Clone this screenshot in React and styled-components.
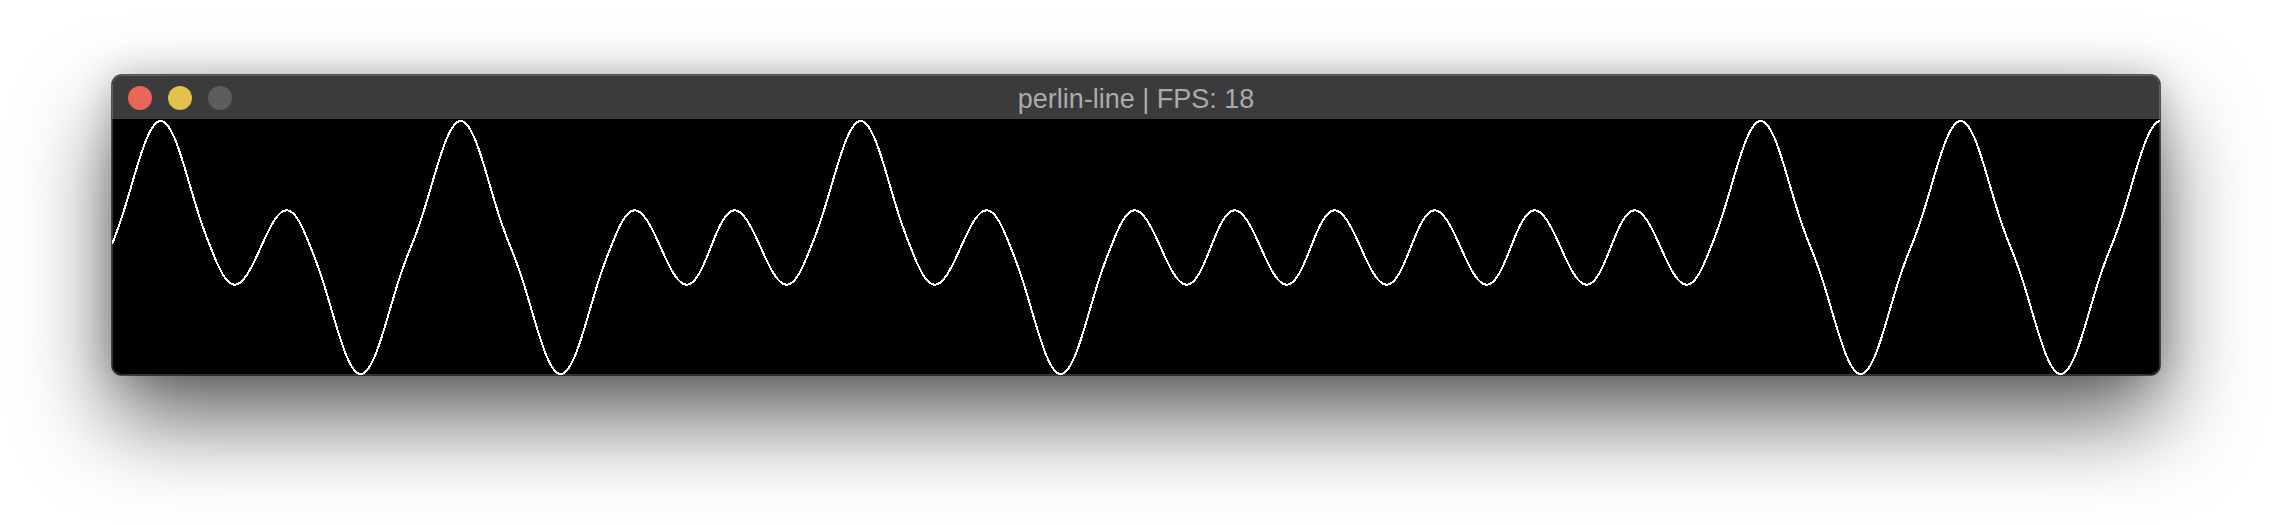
import React from "react";
import styled, { createGlobalStyle } from "styled-components";

const Global = createGlobalStyle`
  html, body { margin: 0; padding: 0; background: #ffffff; }
  body { width: 2272px; height: 524px; overflow: hidden; font-family: "Liberation Sans", Arial, sans-serif; }
`;

const Stage = styled.div`
  width: 2272px;
  height: 524px;
  box-sizing: border-box;
  padding: 75px 112px 0 112px;
  background: #ffffff;
`;

const Window = styled.div`
  position: relative;
  width: 2048px;
  border-radius: 10px;
  overflow: hidden;
  background: #000;
  box-shadow: 0 0 0 1px rgba(0, 0, 0, 0.6), 0 44px 90px rgba(0, 0, 0, 0.62),
    0 0 36px rgba(0, 0, 0, 0.2);
  &::after {
    content: "";
    position: absolute;
    inset: 0;
    border-radius: 10px;
    box-shadow: inset 0 0 0 1px rgba(255, 255, 255, 0.2);
    pointer-events: none;
  }
`;

const TitleBar = styled.div`
  height: 44px;
  display: grid;
  grid-template-columns: 1fr auto 1fr;
  align-items: center;
  background: #3b3b3d;
`;

const Lights = styled.div`
  display: flex;
  gap: 16px;
  padding-left: 16px;
  align-items: center;
`;

const Light = styled.span`
  width: 24px;
  height: 24px;
  border-radius: 50%;
  background: ${(p) => p.$color};
  display: block;
`;

const Title = styled.div`
  font-family: "Liberation Sans", Arial, sans-serif;
  font-size: 27px;
  color: #ababac;
  line-height: 44px;
  padding-top: 2px;
  white-space: nowrap;
`;

const Canvas = styled.svg`
  display: block;
  width: 2048px;
  height: 256px;
  background: #000;
`;

const G = [1, -1, -1, 1, -1, 1, 1, 1, -1, -1, 1, 1, 1, 1, 1, 1, 1, -1, 1, -1, 1, -1, 1];

function fade(t) {
  return t * t * t * (t * (t * 6 - 15) + 10);
}

function noise(u) {
  const i = Math.floor(u);
  const t = u - i;
  const g0 = G[Math.max(0, Math.min(G.length - 1, i))];
  const g1 = G[Math.max(0, Math.min(G.length - 1, i + 1))];
  const a = g0 * t;
  const b = g1 * (t - 1);
  return a + fade(t) * (b - a);
}

function buildPoints() {
  const pts = [];
  for (let x = 0; x <= 1024; x += 0.5) {
    const u = (2 * x + 1.3) / 100;
    const y = 64.25 - noise(u) * 126.5;
    pts.push(`${x.toFixed(2)},${y.toFixed(2)}`);
  }
  return pts.join(" ");
}

const POINTS = buildPoints();

export default function App() {
  return (
    <>
      <Global />
      <Stage>
        <Window>
          <TitleBar>
            <Lights>
              <Light $color="#ec6559" />
              <Light $color="#e1c04c" />
              <Light $color="#5d5d5f" />
            </Lights>
            <Title>perlin-line | FPS: 18</Title>
            <span />
          </TitleBar>
          <Canvas viewBox="0 0 1024 128" preserveAspectRatio="none">
            <polyline
              points={POINTS}
              fill="none"
              stroke="#ffffff"
              strokeWidth="1"
              shapeRendering="crispEdges"
            />
          </Canvas>
        </Window>
      </Stage>
    </>
  );
}
